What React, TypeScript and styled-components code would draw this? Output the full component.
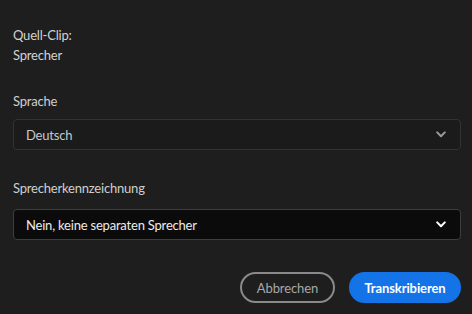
import React from 'react';
import styled, { createGlobalStyle } from 'styled-components';

const GlobalStyle = createGlobalStyle`
  html, body {
    margin: 0;
    padding: 0;
    background: #1e1e1e;
  }
  body {
    font-family: Lato, "Open Sans", sans-serif;
    -webkit-font-smoothing: antialiased;
  }
`;

const Dialog = styled.div`
  width: 472px;
  height: 314px;
  box-sizing: border-box;
  padding: 25px 11px 0 13px;
  background: #1e1e1e;
  display: flex;
  flex-direction: column;
  color: #d4d4d4;
  font-size: 13px;
  letter-spacing: -0.2px;
`;

const InfoLine = styled.div`
  line-height: 20px;
  color: #d2d2d2;
`;

const FieldLabel = styled.div<{ $top: number; $gap: number }>`
  line-height: 20px;
  color: #cfcfcf;
  margin-top: ${({ $top }) => $top}px;
  margin-bottom: ${({ $gap }) => $gap}px;
`;

const Select = styled.div<{ $active?: boolean }>`
  height: 31px;
  box-sizing: border-box;
  display: flex;
  align-items: center;
  justify-content: space-between;
  padding: 0 14px 0 12px;
  border-radius: 4px;
  border: 1px solid ${({ $active }) => ($active ? '#3e3e3e' : '#333333')};
  background: ${({ $active }) => ($active ? '#0b0b0b' : '#1b1b1b')};
  color: ${({ $active }) => ($active ? '#ececec' : '#c8c8c8')};
`;

const Chevron = styled.svg<{ $active?: boolean }>`
  width: 10px;
  height: 7px;
  color: ${({ $active }) => ($active ? '#ffffff' : '#9a9a9a')};
`;

const Footer = styled.div`
  display: flex;
  justify-content: flex-end;
  gap: 14px;
  margin-top: 32px;
`;

const Button = styled.button<{ $primary?: boolean; $width: number }>`
  width: ${({ $width }) => $width}px;
  height: 31px;
  box-sizing: border-box;
  border-radius: 16px;
  font-family: inherit;
  font-size: 13px;
  letter-spacing: -0.1px;
  font-weight: ${({ $primary }) => ($primary ? 700 : 400)};
  padding: 0 10px;
  cursor: pointer;
  border: 2px solid ${({ $primary }) => ($primary ? '#1473e6' : '#8a8a8a')};
  background: ${({ $primary }) => ($primary ? '#1473e6' : 'transparent')};
  color: ${({ $primary }) => ($primary ? '#ffffff' : '#a8a8a8')};
`;

const ChevronIcon = ({ active }: { active?: boolean }) => (
  <Chevron $active={active} viewBox="0 0 10 7">
    <path d="M1.2 1.4 L5 5.2 L8.8 1.4" fill="none" stroke="currentColor" strokeWidth="2" strokeLinecap="round" strokeLinejoin="round" />
  </Chevron>
);

const App: React.FC = () => (
  <>
    <GlobalStyle />
    <Dialog>
      <InfoLine>Quell-Clip:</InfoLine>
      <InfoLine>Sprecher</InfoLine>

      <FieldLabel $top={26} $gap={8}>Sprache</FieldLabel>
      <Select>
        <span>Deutsch</span>
        <ChevronIcon />
      </Select>

      <FieldLabel $top={28} $gap={11}>Sprecherkennzeichnung</FieldLabel>
      <Select $active>
        <span>Nein, keine separaten Sprecher</span>
        <ChevronIcon active />
      </Select>

      <Footer>
        <Button $width={95}>Abbrechen</Button>
        <Button $primary $width={112}>Transkribieren</Button>
      </Footer>
    </Dialog>
  </>
);

export default App;
